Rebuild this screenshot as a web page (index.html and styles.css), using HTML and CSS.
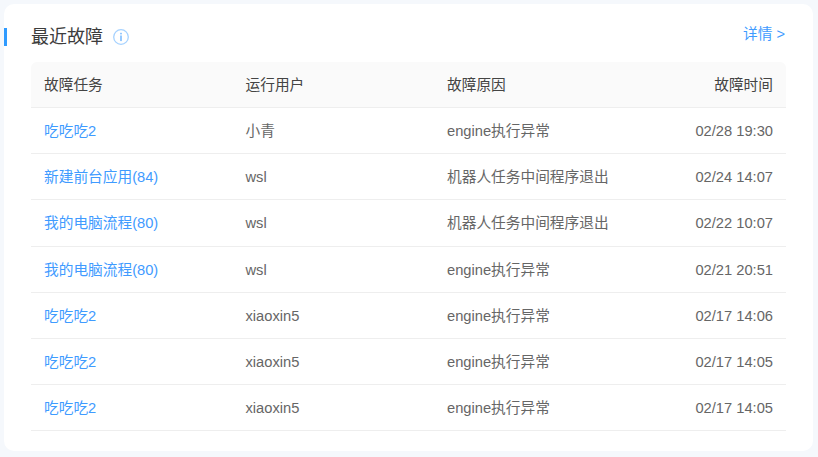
FILE: index.html
```html
<!DOCTYPE html>
<html lang="zh-CN">
<head>
<meta charset="utf-8">
<title>最近故障</title>
<link rel="stylesheet" href="styles.css">
</head>
<body>
<section class="card">
  <header class="card-head">
    <div class="title-wrap">
      <h2 class="title">最近故障</h2>
      <svg class="info" width="16" height="16" viewBox="0 0 16 16" aria-hidden="true">
        <circle cx="8" cy="8" r="7.3" fill="none" stroke="#a6d2ff" stroke-width="1.3"/>
        <rect x="7.2" y="3.8" width="1.6" height="1.6" fill="#7dbcff"/>
        <rect x="7.2" y="6.5" width="1.6" height="5.6" fill="#7dbcff"/>
      </svg>
    </div>
    <a class="more">详情 &gt;</a>
  </header>
  <div class="table">
    <div class="row head"><span>故障任务</span><span>运行用户</span><span>故障原因</span><span class="time">故障时间</span></div>
    <div class="row"><a>吃吃吃2</a><span>小青</span><span>engine执行异常</span><span class="time">02/28 19:30</span></div>
    <div class="row"><a>新建前台应用(84)</a><span>wsl</span><span>机器人任务中间程序退出</span><span class="time">02/24 14:07</span></div>
    <div class="row"><a>我的电脑流程(80)</a><span>wsl</span><span>机器人任务中间程序退出</span><span class="time">02/22 10:07</span></div>
    <div class="row"><a>我的电脑流程(80)</a><span>wsl</span><span>engine执行异常</span><span class="time">02/21 20:51</span></div>
    <div class="row"><a>吃吃吃2</a><span>xiaoxin5</span><span>engine执行异常</span><span class="time">02/17 14:06</span></div>
    <div class="row"><a>吃吃吃2</a><span>xiaoxin5</span><span>engine执行异常</span><span class="time">02/17 14:05</span></div>
    <div class="row"><a>吃吃吃2</a><span>xiaoxin5</span><span>engine执行异常</span><span class="time">02/17 14:05</span></div>
  </div>
</section>
</body>
</html>
```
FILE: styles.css
```css
* { box-sizing: border-box; }
html, body { height: 100%; }
body {
  margin: 0;
  padding: 4px 5px 6px 4px;
  background: #f5f8fc;
  font-family: "Liberation Sans", "Noto Sans CJK SC", sans-serif;
  font-size: 14.7px;
  color: #666;
  overflow: hidden;
}
.card {
  height: 447px;
  padding: 0 27px;
  background: #fff;
  border-radius: 10px;
  position: relative;
}
.card::before {
  content: "";
  position: absolute;
  left: 0;
  top: 24px;
  width: 3px;
  height: 18px;
  background: #2f9bff;
}
.card-head {
  height: 58px;
  display: flex;
  justify-content: space-between;
  align-items: flex-start;
}
.title-wrap {
  display: flex;
  align-items: center;
  gap: 10px;
  height: 24px;
  margin-top: 21px;
}
.title {
  margin: 0;
  font-size: 18px;
  font-weight: 400;
  line-height: 24px;
  color: #3c3c3c;
}
.more {
  margin-top: 20px;
  margin-right: 1px;
  line-height: 20px;
  color: #3f9bff;
}
.table { display: flex; flex-direction: column; }
.row {
  display: grid;
  grid-template-columns: 201.5px 201.5px 201.5px 1fr;
  align-items: center;
  height: 46.2px;
  padding: 1px 13px 0;
  border-bottom: 1px solid #eeeeee;
  line-height: 20px;
}
.row a { color: #3f9bff; }
.head {
  height: 46px;
  background: #fafafa;
  border-radius: 6px 6px 0 0;
  color: #444;
}
.time { text-align: right; }
```
